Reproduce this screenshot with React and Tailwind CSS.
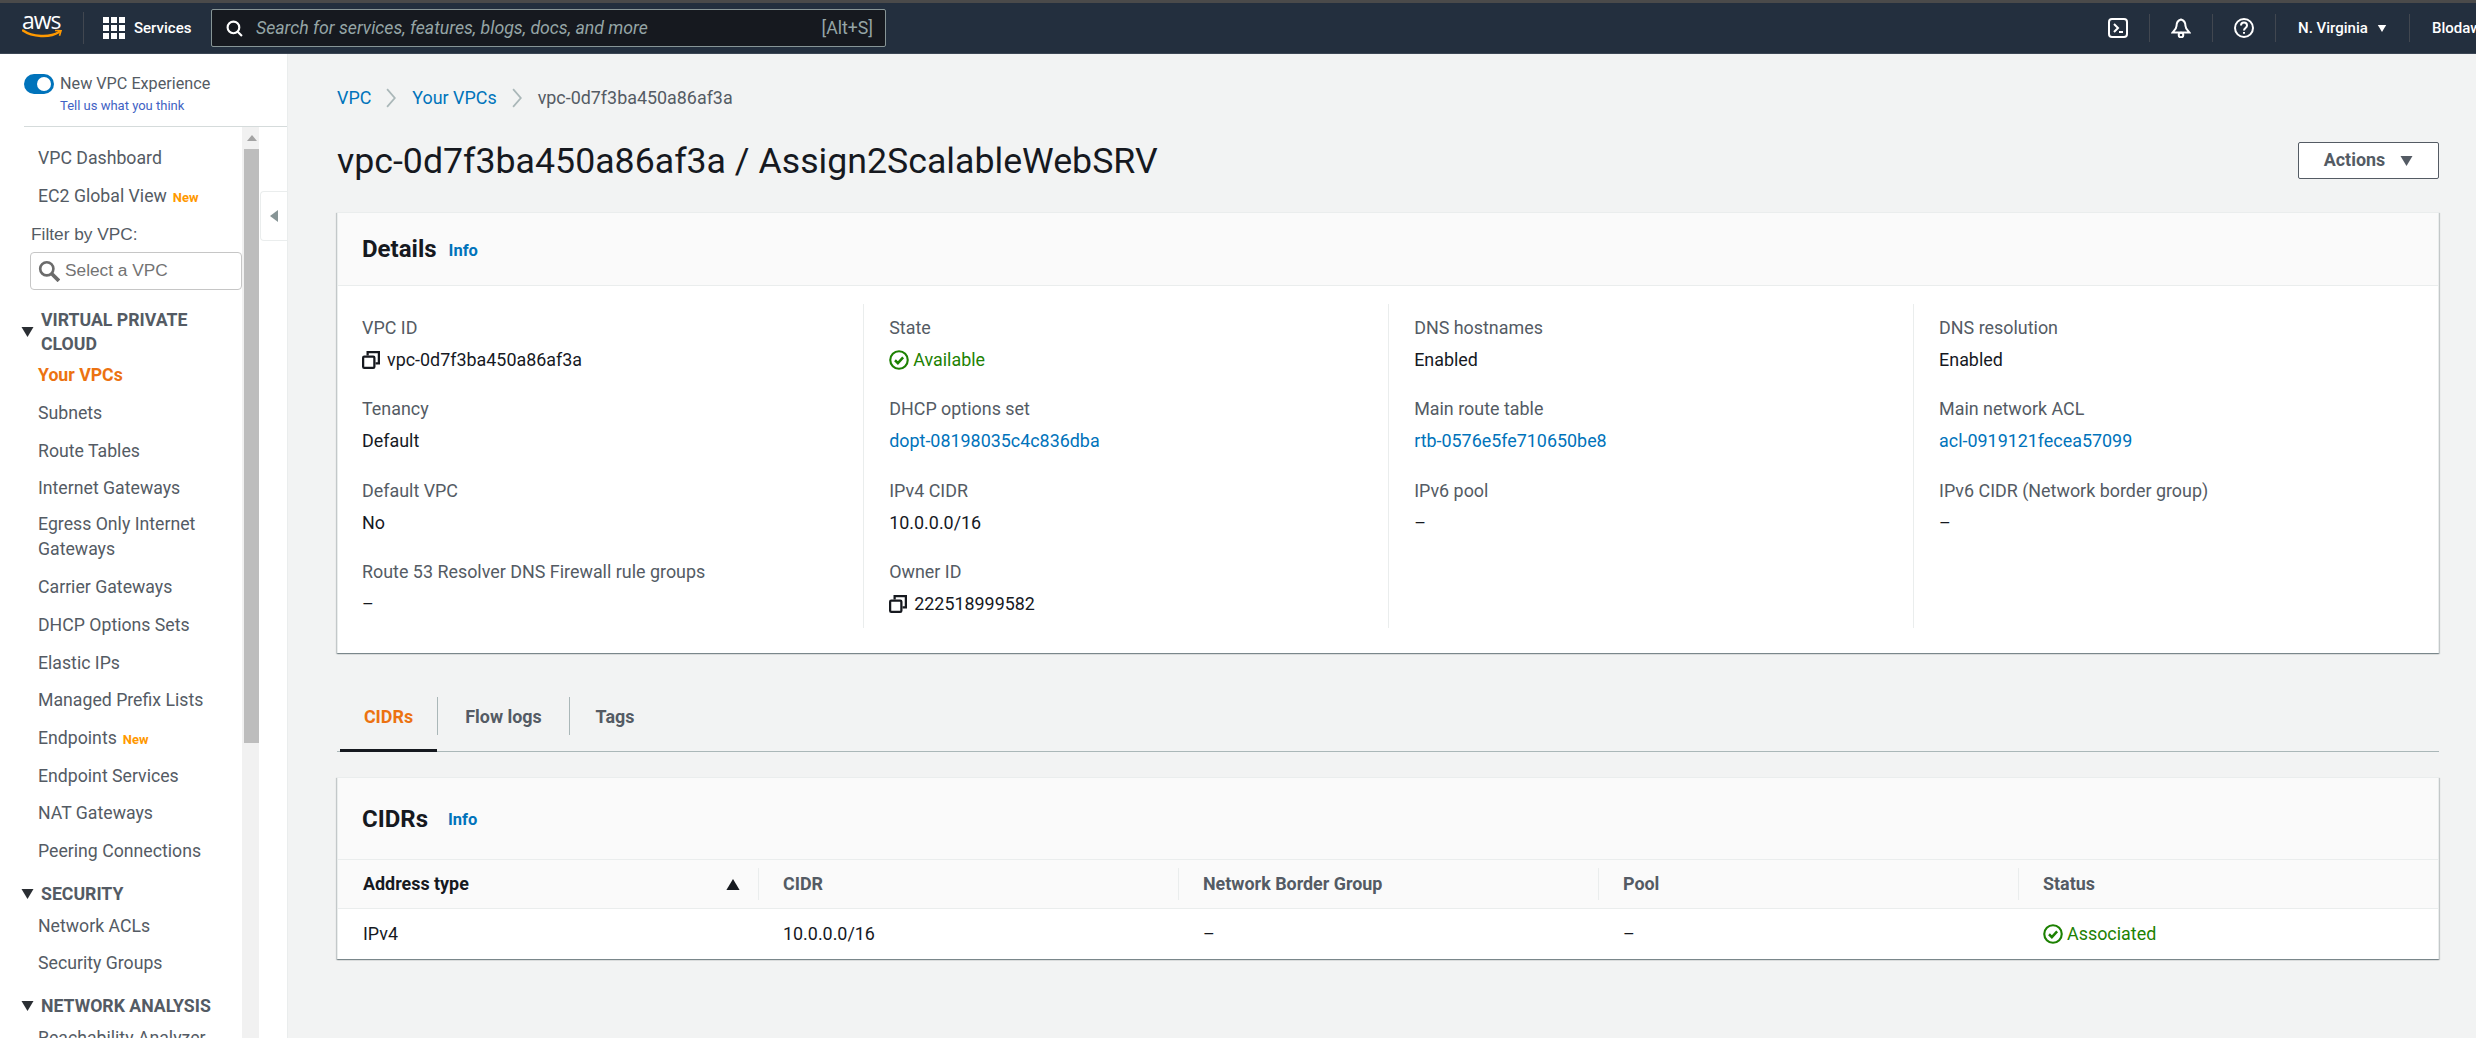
import React from "react";

const FONT = "[font-family:Roboto,'Noto_Sans',sans-serif]";
const SHADOW = "shadow-[0_1px_1px_0_rgba(0,28,36,0.3),1px_1px_1px_0_rgba(0,28,36,0.15),-1px_1px_1px_0_rgba(0,28,36,0.15)]";

const Caret = ({ className = "" }) => (
  <svg viewBox="0 0 12 10" className={className} fill="currentColor"><path d="M0 0h12L6 10z" /></svg>
);

const Copy = () => (
  <svg viewBox="0 0 16 16" className="w-[18px] h-[18px] text-[#16191f] shrink-0" fill="none" stroke="currentColor" strokeWidth="2">
    <rect x="1" y="5" width="10" height="10" rx="1" />
    <path d="M5 4V1h10v10h-3" />
  </svg>
);

const Check = () => (
  <svg viewBox="0 0 16 16" className="w-[20px] h-[20px] shrink-0 text-[#1d8102]" fill="none" stroke="currentColor" strokeWidth="1.7">
    <circle cx="8" cy="8" r="7" />
    <path d="M4.8 8.2l2.3 2.3 4.2-4.6" strokeWidth="2" />
  </svg>
);

const Chevron = () => (
  <svg viewBox="0 0 10 18" className="w-[11px] h-[20px] mx-[15px] text-[#aab7b8]" fill="none" stroke="currentColor" strokeWidth="1.6"><path d="M1 1l7 8-7 8" /></svg>
);

const Item = ({ children, badge, active, two }) => (
  <div className={`${two ? "h-[61px] leading-[25px] pt-[4px]" : "h-[37.7px] leading-[37.7px]"} pl-[38px] text-[17.7px] ${active ? "text-[#ec7211] font-bold" : "text-[#545b64]"}`}>
    {children}
    {badge && <span className="ml-[6px] text-[13px] font-bold text-[#ff9900]">{badge}</span>}
  </div>
);

const Section = ({ children, two, className = "" }) => (
  <div className={`flex items-center pl-[21px] text-[17.7px] font-bold text-[#545b64] leading-[24px] ${className}`}>
    <Caret className="w-[13px] h-[10px] text-[#2a2e33] mr-[7px] shrink-0" />
    <span className={two ? "w-[190px]" : ""}>{children}</span>
  </div>
);

const Field = ({ label, value, link, copy, ok }) => (
  <div className="h-[81.4px]">
    <div className="text-[17.9px] leading-[24px] text-[#545b64]">{label}</div>
    <div className={`mt-[8px] text-[17.9px] leading-[24px] flex items-center ${copy ? "gap-[7px]" : "gap-[4px]"} ${link ? "text-[#0073bb]" : ok ? "text-[#1d8102]" : "text-[#16191f]"}`}>
      {copy && <Copy />}
      {ok && <Check />}
      {value}
    </div>
  </div>
);

const Col = ({ children }) => (
  <div className="w-[525.7px] h-[324px] pl-[25px] pt-[12px] border-l border-[#eaeded] first:border-l-0 first:pl-0 first:w-[502px]">{children}</div>
);

const TH = ({ children, w, bold, sort, first }) => (
  <div className={`${w} h-full flex items-center relative ${first ? "pl-[25px]" : "pl-[25px]"} text-[17.9px] font-bold ${bold ? "text-[#16191f]" : "text-[#545b64]"}`}>
    {children}
    {sort && <svg viewBox="0 0 12 10" className="absolute right-[18px] top-[19px] w-[14px] h-[11px] text-[#16191f]" fill="currentColor"><path d="M6 0l6 10H0z" /></svg>}
    {!first && <span className="absolute left-0 top-[8px] bottom-[8px] w-px bg-[#eaeded]" />}
  </div>
);

const TD = ({ children, w, first }) => (
  <div className={`${w} flex items-center gap-[4px] ${first ? "pl-[25px]" : "pl-[25px]"} text-[17.9px] text-[#16191f]`}>{children}</div>
);

const Sep = ({ className }) => <span className={`w-px h-[28px] bg-[#414750] shrink-0 ${className}`} />;

export default function App() {
  return (
    <div className={`w-[2476px] h-[1038px] overflow-hidden flex flex-col bg-[#f2f3f3] ${FONT}`}>
      <div className="h-[3px] bg-[#4a4a4a] shrink-0" />
      <header className="h-[51px] shrink-0 bg-[#232f3e] border-b border-[#3b4654] flex items-center text-white overflow-hidden">
        <div className="w-[83px] shrink-0 pl-[22px] flex flex-col items-start leading-none">
          <span className="text-[23px] leading-[15px] tracking-[-1px] [font-family:'Open_Sans',sans-serif] -mt-[4px]">aws</span>
          <svg viewBox="0 0 40 10" className="w-[40px] h-[10px] mt-[1px]" fill="none">
            <path d="M1 1.5C10 8 28 9 37 3" stroke="#ff9900" strokeWidth="2.4" strokeLinecap="round" />
            <path d="M33 1.5l6 .2-1.5 5" stroke="#ff9900" strokeWidth="1.6" />
          </svg>
        </div>
        <Sep className="h-[32px]" />
        <div className="grid grid-cols-3 gap-[2px] w-[22px] ml-[19px] shrink-0">
          {Array.from({ length: 9 }).map((_, i) => <span key={i} className="w-[6px] h-[6px] bg-white" />)}
        </div>
        <span className="ml-[9px] font-medium text-[15px] w-[56px] shrink-0 whitespace-nowrap">Services</span>
        <div className="ml-[21px] w-[675px] h-[38px] bg-[#16191f] border border-[#879596] rounded-[2px] flex items-center pl-[14px] pr-[12px] text-[#95a5a6] shrink-0">
          <svg viewBox="0 0 16 16" className="w-[17px] h-[17px] text-white shrink-0" fill="none" stroke="currentColor" strokeWidth="2">
            <circle cx="7" cy="7" r="5.5" /><path d="M11 11l4 4" />
          </svg>
          <span className="ml-[13px] italic text-[17.7px] flex-1 whitespace-nowrap">Search for services, features, blogs, docs, and more</span>
          <span className="text-[17.7px]">[Alt+S]</span>
        </div>
        <svg viewBox="0 0 20 20" className="w-[20px] h-[20px] ml-[1222px] shrink-0" fill="none" stroke="white" strokeWidth="2">
          <rect x="1" y="1" width="18" height="18" rx="3" /><path d="M6 6l4 4-4 4M11 14h4" />
        </svg>
        <Sep className="mx-[21px]" />
        <svg viewBox="0 0 20 20" className="w-[20px] h-[20px] shrink-0" fill="none" stroke="white" strokeWidth="2">
          <path d="M10 1.5c-3.5 1-4.5 4-4.5 6.5 0 3-3 5-4 6.5h17c-1-1.500-4-3.500-4-6.500 0-2.500-1-5.500-4.500-6.500z" /><circle cx="10" cy="17" r="2.300" />
        </svg>
        <Sep className="mx-[21px]" />
        <svg viewBox="0 0 20 20" className="w-[20px] h-[20px] shrink-0" fill="none" stroke="white" strokeWidth="2">
          <circle cx="10" cy="10" r="9" /><path d="M7 7.500c0-4 6-4 6 0 0 2.500-3 2.500-3 5" /><path d="M10 14v1.800" />
        </svg>
        <Sep className="ml-[21px] mr-[22px]" />
        <span className="text-[15px] font-medium w-[70px] shrink-0 whitespace-nowrap">N. Virginia</span>
        <Caret className="w-[10px] h-[7px] ml-[9px] text-white shrink-0" />
        <Sep className="mx-[22px]" />
        <span className="text-[15px] font-medium shrink-0 whitespace-nowrap">Blodaw</span>
      </header>

      <div className="flex-1 flex min-h-0">
        <aside className="w-[288px] shrink-0 bg-white flex flex-col relative overflow-hidden border-r border-[#eaeded]">
          <div className="shrink-0 h-[73px] ml-[24px] border-b border-[#d5dbdb] flex items-start pt-[20px]">
            <span className="w-[30px] h-[20px] rounded-full bg-[#0073bb] flex items-center justify-end pr-[3px] mr-[6px] shrink-0">
              <span className="w-[14px] h-[14px] rounded-full bg-white" />
            </span>
            <div>
              <div className="text-[16.2px] leading-[20px] text-[#545b64] whitespace-nowrap">New VPC Experience</div>
              <div className="text-[13px] leading-[16px] mt-[4px] text-[#3f62c4] whitespace-nowrap">Tell us what you think</div>
            </div>
          </div>
          <div className="flex-1 flex min-h-0">
            <div className="w-[242px] shrink-0 pt-[13px]">
              <Item>VPC Dashboard</Item>
              <Item badge="New">EC2 Global View</Item>
              <div className="pl-[31px] text-[17.3px] leading-[38px] h-[37px] text-[#545b64] [font-family:'Liberation_Sans',sans-serif]">Filter by VPC:</div>
              <div className="ml-[30px] w-[212px] h-[38px] border border-[#c6c6c6] rounded-[4px] flex items-center pl-[7px] -mt-[0px] text-[17.3px] text-[#737373] [font-family:'Liberation_Sans',sans-serif]">
                <svg viewBox="0 0 20 20" className="w-[22px] h-[22px] text-[#6b6b6b] mr-[5px]" fill="none" stroke="currentColor" strokeWidth="2.4">
                  <circle cx="8" cy="8" r="6" /><path d="M12.500 12.500L19 19" strokeWidth="3.400" />
                </svg>
                Select a VPC
              </div>
              <Section two className="mt-[18px] mb-[1px]">VIRTUAL PRIVATE CLOUD</Section>
              <Item active>Your VPCs</Item>
              <Item>Subnets</Item>
              <Item>Route Tables</Item>
              <Item>Internet Gateways</Item>
              <Item two>Egress Only Internet Gateways</Item>
              <Item>Carrier Gateways</Item>
              <Item>DHCP Options Sets</Item>
              <Item>Elastic IPs</Item>
              <Item>Managed Prefix Lists</Item>
              <Item badge="New">Endpoints</Item>
              <Item>Endpoint Services</Item>
              <Item>NAT Gateways</Item>
              <Item>Peering Connections</Item>
              <Section className="mt-[11px] mb-[2px]">SECURITY</Section>
              <Item>Network ACLs</Item>
              <Item>Security Groups</Item>
              <Section className="mt-[11px] mb-[2px]">NETWORK ANALYSIS</Section>
              <Item>Reachability Analyzer</Item>
            </div>
            <div className="w-[17px] shrink-0 bg-[#f1f1f1] flex flex-col items-end">
              <div className="h-[22px] w-[15px] flex items-center justify-center">
                <svg viewBox="0 0 10 6" className="w-[10px] h-[6px] text-[#a3a3a3]" fill="currentColor"><path d="M5 0l5 6H0z" /></svg>
              </div>
              <div className="h-[594px] w-[15px] bg-[#bdbdbd]" />
            </div>
            <div className="flex-1 pt-[64px]">
              <div className="h-[50px] ml-[1px] border border-r-0 border-[#eaeded] rounded-l-[4px] flex items-center justify-center bg-white">
                <svg viewBox="0 0 8 12" className="w-[8px] h-[12px] text-[#879596]" fill="currentColor"><path d="M8 0v12L0 6z" /></svg>
              </div>
            </div>
          </div>
        </aside>

        <main className="flex-1 min-w-0 pl-[49px] pr-[37px]">
          <div className="h-[88px] flex items-center text-[17.9px]">
            <span className="text-[#0073bb]">VPC</span>
            <Chevron />
            <span className="text-[#0073bb]">Your VPCs</span>
            <Chevron />
            <span className="text-[#545b64]">vpc-0d7f3ba450a86af3a</span>
          </div>
          <div className="flex items-center justify-between h-[37px]">
            <h1 className="text-[35.7px] leading-[40px] text-[#16191f] font-normal">vpc-0d7f3ba450a86af3a / Assign2ScalableWebSRV</h1>
            <button className="w-[141px] h-[37px] bg-white border border-[#545b64] rounded-[2px] flex items-center justify-center gap-[15px] text-[#545b64] font-bold text-[17.9px]">
              Actions
              <Caret className="w-[13px] h-[10px]" />
            </button>
          </div>

          <section className={`mt-[33px] h-[441px] bg-white border border-[#eaeded] border-b-0 ${SHADOW}`}>
            <div className="h-[73px] bg-[#fafafa] border-b border-[#eaeded] flex items-center pl-[24px]">
              <span className="text-[24px] font-bold text-[#16191f]">Details</span>
              <span className="ml-[12px] mt-[4px] text-[16.5px] font-bold text-[#0073bb]">Info</span>
            </div>
            <div className="flex pl-[24px] pt-[18px]">
              <Col>
                <Field label="VPC ID" value="vpc-0d7f3ba450a86af3a" copy />
                <Field label="Tenancy" value="Default" />
                <Field label="Default VPC" value="No" />
                <Field label="Route 53 Resolver DNS Firewall rule groups" value="–" />
              </Col>
              <Col>
                <Field label="State" value="Available" ok />
                <Field label="DHCP options set" value="dopt-08198035c4c836dba" link />
                <Field label="IPv4 CIDR" value="10.0.0.0/16" />
                <Field label="Owner ID" value="222518999582" copy />
              </Col>
              <Col>
                <Field label="DNS hostnames" value="Enabled" />
                <Field label="Main route table" value="rtb-0576e5fe710650be8" link />
                <Field label="IPv6 pool" value="–" />
              </Col>
              <Col>
                <Field label="DNS resolution" value="Enabled" />
                <Field label="Main network ACL" value="acl-0919121fecea57099" link />
                <Field label="IPv6 CIDR (Network border group)" value="–" />
              </Col>
            </div>
          </section>

          <div className="mt-[38px] h-[61px] border-b border-[#aab7b8] flex">
            <div className="relative w-[97px] ml-[3px] flex items-center justify-center text-[17.9px] font-bold text-[#ec7211] pb-[7px]">
              CIDRs
              <span className="absolute left-0 right-0 -bottom-[1px] h-[3px] bg-[#16191f]" />
            </div>
            <div className="w-px h-[38px] bg-[#aab7b8] mt-[6px]" />
            <div className="w-[131px] flex items-center justify-center text-[17.9px] font-bold text-[#545b64] pb-[7px]">Flow logs</div>
            <div className="w-px h-[38px] bg-[#aab7b8] mt-[6px]" />
            <div className="w-[90px] flex items-center justify-center text-[17.9px] font-bold text-[#545b64] pb-[7px]">Tags</div>
          </div>

          <section className={`mt-[25px] bg-white border border-[#eaeded] border-b-0 ${SHADOW}`}>
            <div className="h-[82px] bg-[#fafafa] border-b border-[#eaeded] flex items-center pl-[24px]">
              <span className="text-[24px] font-bold text-[#16191f]">CIDRs</span>
              <span className="ml-[20px] mt-[4px] text-[16.5px] font-bold text-[#0073bb]">Info</span>
            </div>
            <div className="h-[49px] bg-[#fafafa] border-b border-[#eaeded] flex">
              <TH w="w-[420px]" first bold sort>Address type</TH>
              <TH w="w-[420px]">CIDR</TH>
              <TH w="w-[420px]">Network Border Group</TH>
              <TH w="w-[420px]">Pool</TH>
              <TH w="flex-1">Status</TH>
            </div>
            <div className="h-[50px] flex">
              <TD w="w-[420px]" first>IPv4</TD>
              <TD w="w-[420px]">10.0.0.0/16</TD>
              <TD w="w-[420px]">–</TD>
              <TD w="w-[420px]">–</TD>
              <TD w="flex-1"><Check /><span className="text-[#1d8102]">Associated</span></TD>
            </div>
          </section>
        </main>
      </div>
    </div>
  );
}
